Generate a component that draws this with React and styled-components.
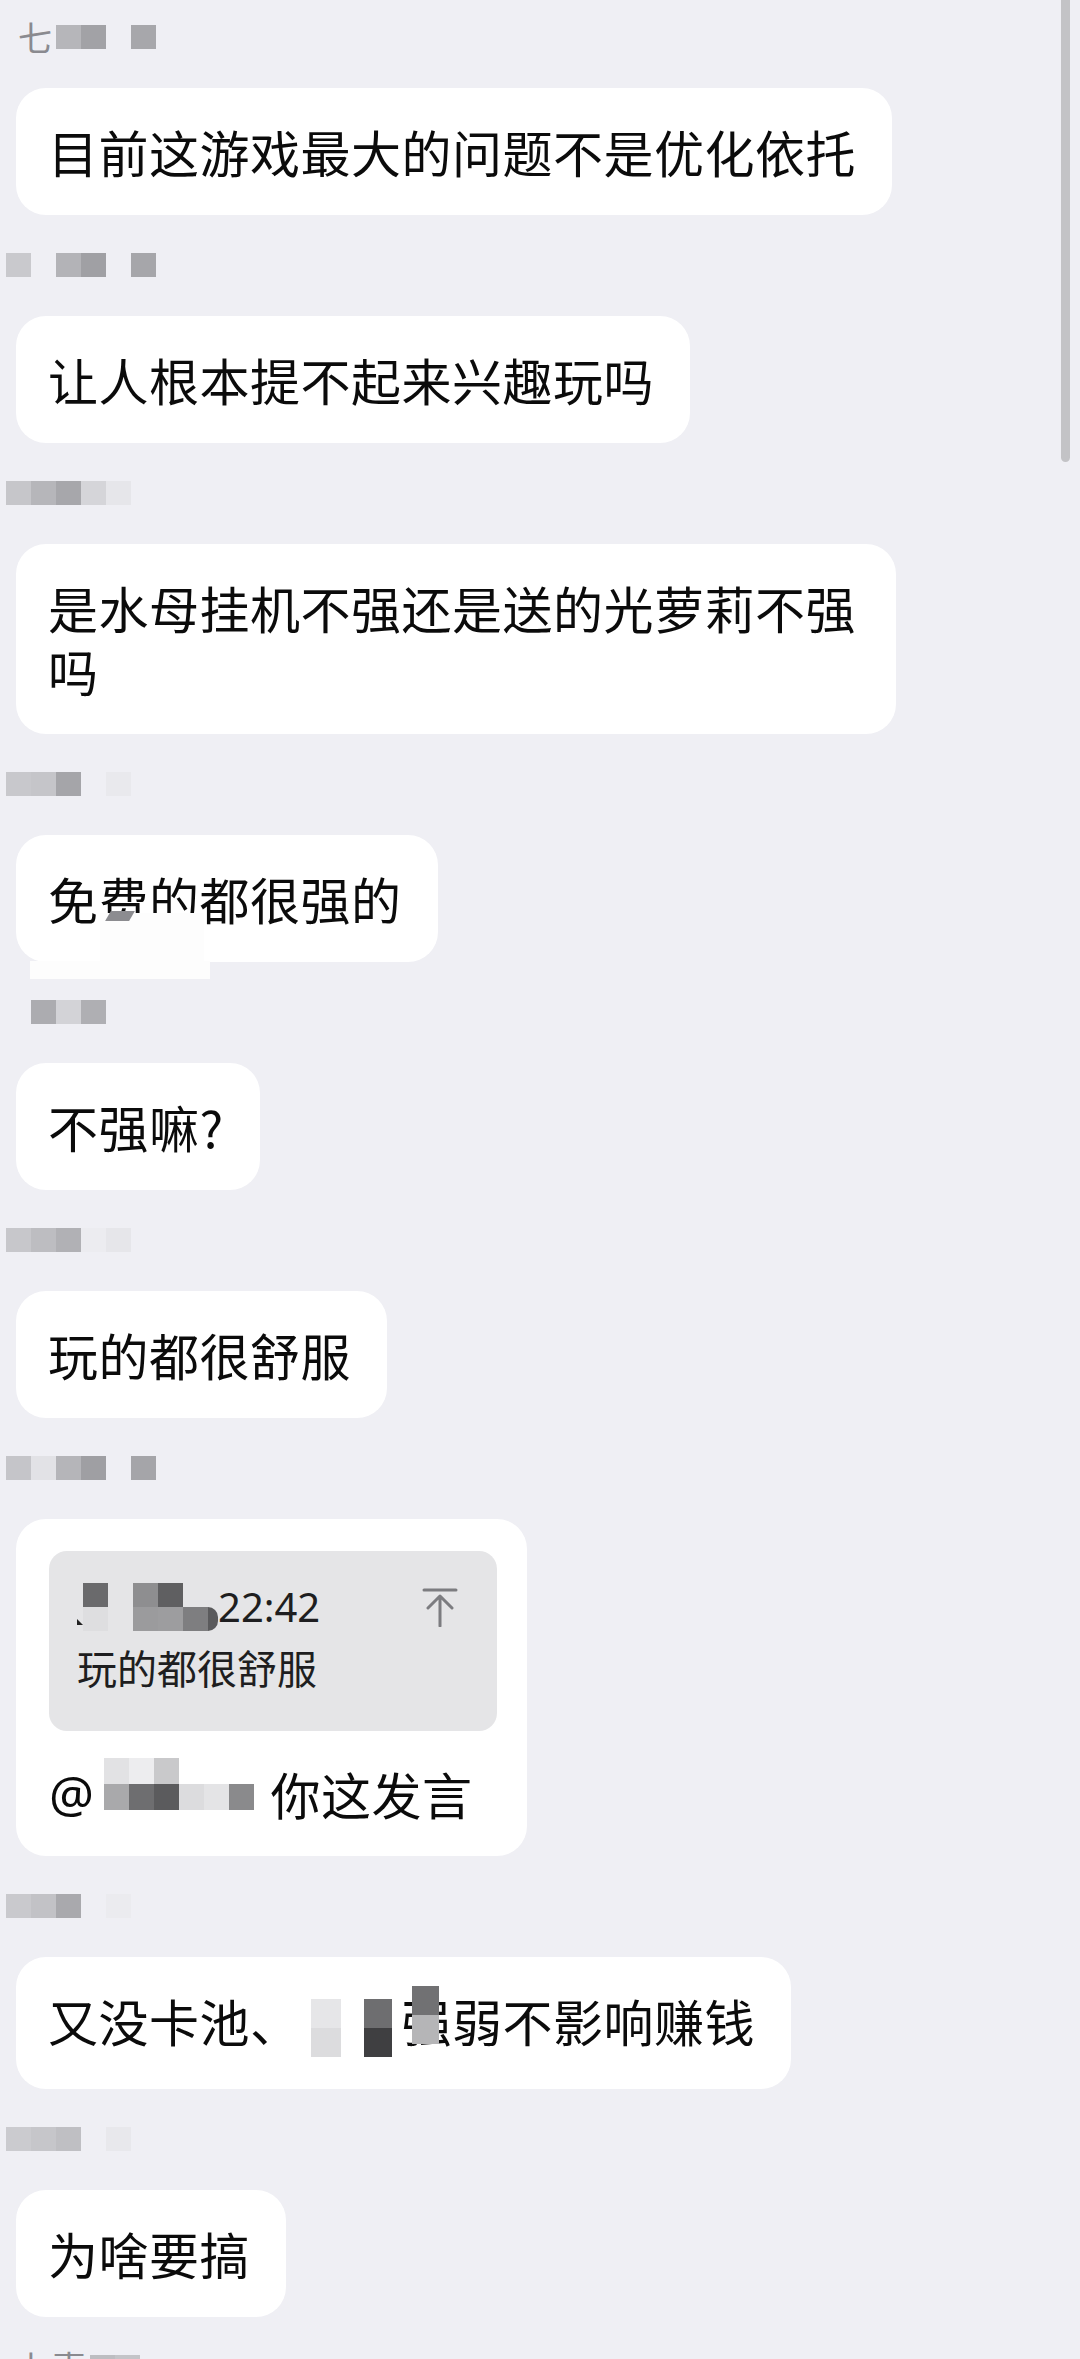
import React from "react";
import styled, { createGlobalStyle } from "styled-components";

const GlobalStyle = createGlobalStyle`
  html, body {
    margin: 0;
    padding: 0;
    background: #efeff4;
  }
  body {
    font-family: "Noto Sans CJK SC", "Noto Sans", sans-serif;
  }
`;

//data
const messages = [
  {
    nameText: "七",
    cells: ["#b6b6ba", "#a2a2a6", null, "#a7a7ab"],
    text: "目前这游戏最大的问题不是优化依托",
  },
  {
    cells: ["#c9c9cd", null, "#b3b3b7", "#a0a0a4", null, "#a6a6aa"],
    text: "让人根本提不起来兴趣玩吗",
  },
  {
    cells: ["#c6c6ca", "#b6b6ba", "#a7a7ab", "#d5d5d9", "#e6e6ea"],
    text: "是水母挂机不强还是送的光萝莉不强吗",
  },
  {
    cells: ["#c8c8cc", "#c5c5c9", "#a5a5a9", null, "#e9e9ed"],
    text: "免费的都很强的",
    smudge: true,
  },
  {
    cells: [null, "#acacb0", "#d3d3d7", "#afafb3"],
    text: "不强嘛?",
  },
  {
    cells: ["#c7c7cb", "#bdbdc1", "#b1b1b5", "#ececf0", "#e6e6ea"],
    text: "玩的都很舒服",
  },
  {
    cells: ["#c5c5c9", "#e2e2e6", "#b5b5b9", "#9f9fa3", null, "#a5a5a9"],
    quote: true,
  },
  {
    cells: ["#c9c9cd", "#c2c2c6", "#a9a9ad", null, "#ebebef"],
    censored: true,
  },
  {
    cells: ["#cbcbcf", "#c6c6ca", "#bfbfc3", null, "#e8e8ec"],
    text: "为啥要搞",
  },
  {
    nameText: "七喜",
    cells: ["#bdbdc1", "#c4c4c8"],
    text: "",
  },
];

const quoteMosaic = [
  ["#6a6a6c", null, "#8e8e90", "#5f5f61", null],
  ["#dedee0", null, "#9b9b9d", "#9d9d9f", "#7e7e80"],
];

const replyMosaic = [
  ["#e2e2e4", "#ededef", "#c9c9cb", null, null, null],
  ["#a9a9ab", "#6e6e70", "#5b5b5d", "#dcdcde", "#e4e4e6", "#8a8a8c"],
];

function Mosaic({ rows, size, height }) {
  return (
    <MosaicGrid>
      {rows.map((row, i) => (
        <MosaicRow key={i}>
          {row.map((c, j) => (
            <Cell key={j} $c={c} $w={size} $h={height} />
          ))}
        </MosaicRow>
      ))}
    </MosaicGrid>
  );
}

function QuoteBody() {
  return (
    <>
      <QuoteBox>
        <QuoteHead>
          <QuoteWho>
            <Marker />
            <Mosaic rows={quoteMosaic} size={25} height={24} />
            <DarkTail />
            <Time>22:42</Time>
          </QuoteWho>
          <svg width="36" height="40" viewBox="0 0 36 40" fill="none">
            <path
              d="M2 3h32M6 21l12-12 12 12M18 9v30"
              stroke="#7c7c80"
              strokeWidth="3"
              strokeLinecap="round"
              strokeLinejoin="round"
            />
          </svg>
        </QuoteHead>
        <QuoteText>玩的都很舒服</QuoteText>
      </QuoteBox>
      <ReplyLine>
        <At>@</At>
        <ReplyMask>
          <Mosaic rows={replyMosaic} size={25} height={26} />
        </ReplyMask>
        <span>你这发言</span>
      </ReplyLine>
    </>
  );
}

function CensoredBody() {
  return (
    <>
      又没卡池、
      <Censor>
        <Piece $w={30} $ml={10} $top="#e6e6e8" $bottom="#dcdcde" />
        <Piece $w={28} $ml={23} $top="#6e6e70" $bottom="#3f3f41" />
      </Censor>
      <Covered>强</Covered>弱不影响赚钱
    </>
  );
}

function App() {
  return (
    <Page>
      <GlobalStyle />
      <Feed>
        {messages.map((m, i) => (
          <Message key={i}>
            <NameRow>
              {m.nameText && <NameText>{m.nameText}</NameText>}
              <Mosaic rows={[m.cells]} size={25} height={24} />
            </NameRow>
            {m.quote ? (
              <Bubble $quote>
                <QuoteBody />
              </Bubble>
            ) : m.censored ? (
              <Bubble>
                <CensoredBody />
              </Bubble>
            ) : m.text ? (
              <Bubble>
                {m.text}
                {m.smudge && (
                  <>
                    <Smudge $l={84} $t={78} $w={104} $h={50} />
                    <Smudge $l={14} $t={126} $w={180} $h={18} />
                    <Blot />
                  </>
                )}
              </Bubble>
            ) : null}
          </Message>
        ))}
      </Feed>
      <ScrollThumb />
    </Page>
  );
}

const Page = styled.div`
  position: relative;
  width: 1080px;
  height: 2359px;
  overflow: hidden;
  box-sizing: border-box;
  padding-top: 20px;
  background: #efeff4;
`;
const Feed = styled.div`
  display: flex;
  flex-direction: column;
  align-items: flex-start;
`;
const Message = styled.section`
  display: flex;
  flex-direction: column;
  align-items: flex-start;
  margin-bottom: 33px;
`;
const NameRow = styled.div`
  display: flex;
  align-items: center;
  height: 34px;
  padding-left: 6px;
  margin-bottom: 34px;
  font-size: 34px;
  line-height: 34px;
  color: #8a8a8f;
`;
const NameText = styled.span`
  margin-left: 12px;
  margin-right: 4px;
`;
const MosaicGrid = styled.span`
  display: inline-flex;
  flex-direction: column;
  flex: none;
`;
const MosaicRow = styled.span`
  display: flex;
`;
const Cell = styled.span`
  flex: none;
  width: ${(p) => p.$w}px;
  height: ${(p) => p.$h}px;
  background: ${(p) => p.$c || "transparent"};
`;
const Bubble = styled.div`
  position: relative;
  margin-left: 16px;
  max-width: 880px;
  box-sizing: border-box;
  padding: ${(p) => (p.$quote ? "32px 30px 31px 33px" : "32px 36px 32px 32px")};
  background: #ffffff;
  border-radius: 30px;
  font-size: 50px;
  line-height: 63px;
  letter-spacing: 0.5px;
  color: #0b0b0b;
  word-break: break-all;
`;
const Smudge = styled.span`
  position: absolute;
  left: ${(p) => p.$l}px;
  top: ${(p) => p.$t}px;
  width: ${(p) => p.$w}px;
  height: ${(p) => p.$h}px;
  background: #fdfdfd;
`;
const Blot = styled.span`
  position: absolute;
  left: 92px;
  top: 76px;
  width: 24px;
  height: 10px;
  background: #8c8c90;
  transform: skewX(-30deg);
`;
const QuoteBox = styled.div`
  width: 448px;
  height: 180px;
  box-sizing: border-box;
  padding: 26px 28px 0 28px;
  background: #e5e5e7;
  border-radius: 18px;
  color: #1e1e20;
  font-size: 40px;
  line-height: 60px;
  letter-spacing: 0;
`;
const QuoteHead = styled.div`
  display: flex;
  align-items: center;
  justify-content: space-between;
  height: 60px;
  padding-right: 11px;
`;
const QuoteWho = styled.div`
  display: flex;
  align-items: center;
`;
const Marker = styled.span`
  width: 0;
  height: 0;
  margin-top: 30px;
  border-left: 6px solid #222;
  border-top: 6px solid transparent;
`;
const DarkTail = styled.span`
  width: 10px;
  height: 24px;
  margin-top: 24px;
  background: #5a5a5c;
  border-radius: 0 12px 12px 0;
`;
const Time = styled.span`
  font-family: "Noto Sans", "Liberation Sans", sans-serif;
  font-size: 40px;
  margin-left: 0;
`;
const QuoteText = styled.div`
  height: 60px;
`;
const ReplyLine = styled.div`
  display: flex;
  align-items: center;
  margin-top: 31px;
  height: 63px;
`;
const At = styled.span`
  font-family: "Noto Sans", sans-serif;
`;
const ReplyMask = styled.span`
  display: flex;
  margin-left: 10px;
  margin-right: 16px;
  margin-bottom: 20px;
`;
const Censor = styled.span`
  display: inline-flex;
  width: 101px;
  height: 58px;
  vertical-align: middle;
`;
const Piece = styled.span`
  flex: none;
  width: ${(p) => p.$w}px;
  margin-left: ${(p) => p.$ml}px;
  background: linear-gradient(
    ${(p) => p.$top} 0 50%,
    ${(p) => p.$bottom} 50% 100%
  );
`;
const Covered = styled.span`
  position: relative;
  &::before {
    content: "";
    position: absolute;
    left: 10px;
    top: 2px;
    width: 27px;
    height: 58px;
    background: linear-gradient(#717173 0 50%, #b5b5b7 50% 100%);
  }
`;
const ScrollThumb = styled.div`
  position: absolute;
  top: 0;
  right: 10px;
  width: 9px;
  height: 462px;
  background: #c3c3c6;
  border-radius: 0 0 5px 5px;
`;

export default App;
